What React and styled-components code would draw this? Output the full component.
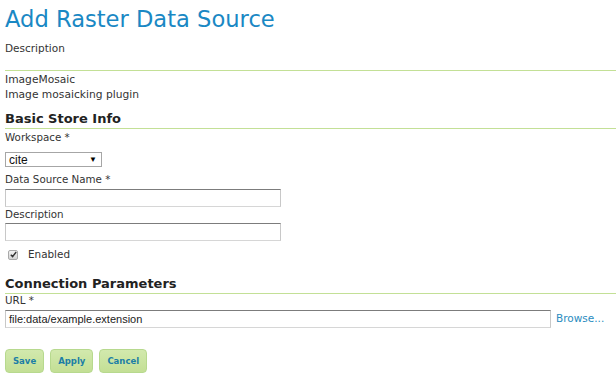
import React from "react";
import styled, { createGlobalStyle } from "styled-components";

const Global = createGlobalStyle`
  html, body { margin: 0; padding: 0; background: #fff; }
  body { font-family: "DejaVu Sans", Verdana, sans-serif; color: #333; }
`;

const Page = styled.div`
  padding: 0 0 0 5px;
`;

const Title = styled.h1`
  margin: 5px 0 0;
  font-size: 22.6px;
  line-height: 28px;
  font-weight: normal;
  color: #1a88c4;
`;

const Text = styled.div`
  font-size: ${p => p.$size || 10.5}px;
  line-height: ${p => p.$lh || 13}px;
  margin-top: ${p => p.$mt || 0}px;
`;

const InfoBlock = styled.div`
  margin-top: 15px;
  border-top: 1px solid #c3e096;
  padding-top: 1px;
`;

const SectionTitle = styled.h2`
  margin: ${p => p.$mt}px 0 0;
  padding-bottom: 1px;
  border-bottom: 1px solid #c3e096;
  font-size: 13px;
  line-height: 16px;
  font-weight: bold;
  color: #222;
`;

const Label = styled.label`
  display: block;
  font-size: 10.3px;
  line-height: 13px;
  margin-top: ${p => p.$mt || 0}px;
`;

const Select = styled.div`
  margin-top: 8px;
  width: 97px;
  height: 15px;
  box-sizing: border-box;
  border: 1px solid #a6a6a6;
  display: flex;
  align-items: center;
  justify-content: space-between;
  padding: 0 4px 0 3px;
  font-family: "Liberation Sans", Arial, sans-serif;
  font-size: 12px;
  color: #111;
`;

const Arrow = styled.span`
  font-size: 8px;
  color: #000;
`;

const Input = styled.div`
  margin-top: ${p => p.$mt || 0}px;
  width: ${p => p.$w}px;
  height: 18px;
  box-sizing: border-box;
  border-style: solid;
  border-width: 1px;
  border-color: #7c7c7c #c8c8c8 #d6d6d6 #c8c8c8;
  background: #fff;
  padding: 0 3px;
  display: flex;
  align-items: center;
  font-family: "Liberation Sans", Arial, sans-serif;
  font-size: 11px;
  color: #222;
`;

const CheckRow = styled.div`
  margin-top: 7px;
  display: flex;
  align-items: center;
  font-size: 10.4px;
  line-height: 13px;
`;

const Box = styled.span`
  width: 10px;
  height: 10px;
  box-sizing: border-box;
  margin: 0 10px 0 3px;
  border: 1px solid #a9a9a9;
  border-radius: 2px;
  background: linear-gradient(#f2f2f2, #d4d4d4);
  display: flex;
  align-items: center;
  justify-content: center;
`;

const UrlRow = styled.div`
  margin-top: 3px;
  display: flex;
  align-items: center;
  gap: 5px;
`;

const Link = styled.a`
  font-size: 10.5px;
  line-height: 13px;
  margin-top: -2px;
  color: #2a8cc0;
  text-decoration: none;
`;

const Buttons = styled.div`
  margin-top: 21px;
  display: flex;
  gap: 6px;
`;

const Button = styled.button`
  height: 24px;
  padding: 0 7px;
  border: 1px solid #b7d98e;
  border-radius: 4px;
  background: linear-gradient(#d2e9ad, #c3df95);
  font-family: "DejaVu Sans", Verdana, sans-serif;
  font-weight: bold;
  font-size: 8.5px;
  color: #1c7ea6;
  cursor: pointer;
`;

export default function App() {
  return (
    <>
      <Global />
      <Page>
        <Title>Add Raster Data Source</Title>
        <Text $mt={9}>Description</Text>
        <InfoBlock>
          <Text $size={10.7} $lh={15}>ImageMosaic</Text>
          <Text $size={10.7} $lh={15}>Image mosaicking plugin</Text>
        </InfoBlock>
        <SectionTitle $mt={9}>Basic Store Info</SectionTitle>
        <Label $mt={2}>Workspace *</Label>
        <Select>
          <span>cite</span>
          <Arrow>▼</Arrow>
        </Select>
        <Label $mt={6}>Data Source Name *</Label>
        <Input $w={276} $mt={3} />
        <Label $mt={1}>Description</Label>
        <Input $w={276} $mt={2} />
        <CheckRow>
          <Box>
            <svg width="7" height="7" viewBox="0 0 7 7">
              <path d="M0.8 3.8 L2.6 5.6 L6.2 1" fill="none" stroke="#333" strokeWidth="1.4" />
            </svg>
          </Box>
          Enabled
        </CheckRow>
        <SectionTitle $mt={15}>Connection Parameters</SectionTitle>
        <Label>URL *</Label>
        <UrlRow>
          <Input $w={546}>file:data/example.extension</Input>
          <Link href="#">Browse...</Link>
        </UrlRow>
        <Buttons>
          <Button>Save</Button>
          <Button>Apply</Button>
          <Button>Cancel</Button>
        </Buttons>
      </Page>
    </>
  );
}
